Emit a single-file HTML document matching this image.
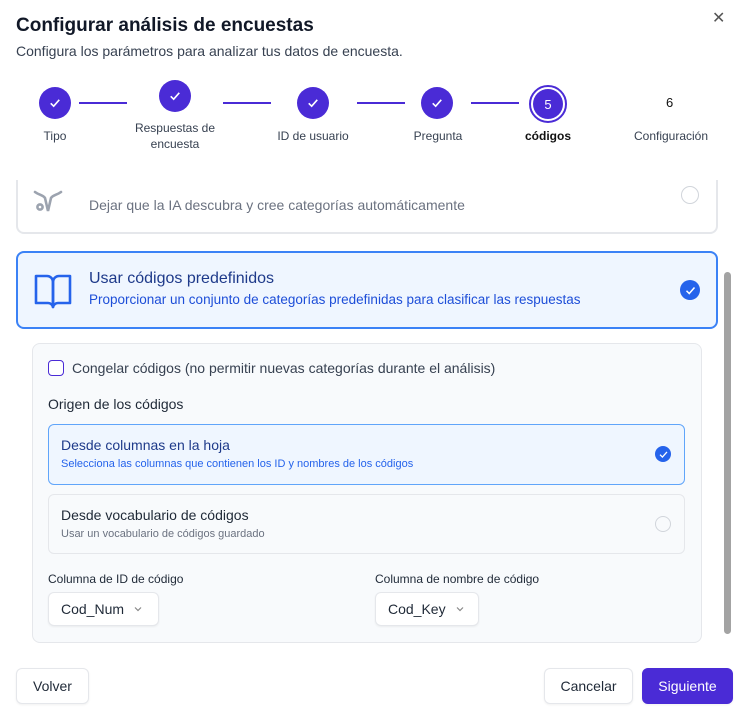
<!DOCTYPE html>
<html><head><meta charset="utf-8"><style>
*{box-sizing:border-box;margin:0;padding:0}
body{width:745px;height:716px;background:#fff;font-family:"Liberation Sans",sans-serif;color:#1f2937;position:relative;overflow:hidden}
.a{position:absolute}
.circ{position:absolute;width:32px;height:32px;border-radius:50%;background:#4a2bd6;color:#fff;display:flex;align-items:center;justify-content:center;font-size:13px}
.line{position:absolute;height:2px;background:#4a2bd6;top:102px}
.lbl{position:absolute;font-size:12px;color:#374151;text-align:center;transform:translateX(-50%);line-height:16px;white-space:nowrap}
.btn{position:absolute;border:1px solid #e5e7eb;border-radius:6px;background:#fff;font-size:14px;display:flex;align-items:center;justify-content:center;box-shadow:0 1px 2px rgba(0,0,0,.06)}
.chk{position:absolute;width:16px;height:16px;border-radius:50%;background:#2563eb;display:flex;align-items:center;justify-content:center}
</style></head><body>
<div class="a" style="left:16px;top:15px;font-size:19px;font-weight:700;color:#111827">Configurar análisis de encuestas</div>
<div class="a" style="left:16px;top:43px;font-size:14px;color:#374151">Configura los parámetros para analizar tus datos de encuesta.</div>
<div class="a" style="left:712px;top:8px;font-size:16px;color:#555">✕</div>

<svg width="0" height="0" style="position:absolute"><defs><symbol id="ck" viewBox="0 0 12 12"><path d="M2.8 6.2l2.2 2.2 4.2-4.8" fill="none" stroke="#fff" stroke-width="1.2"/></symbol></defs></svg>
<div class="circ" style="left:39px;top:87px"><svg width="16" height="16"><use href="#ck"/></svg></div>
<div class="circ" style="left:159px;top:80px"><svg width="16" height="16"><use href="#ck"/></svg></div>
<div class="circ" style="left:297px;top:87px"><svg width="16" height="16"><use href="#ck"/></svg></div>
<div class="circ" style="left:421px;top:87px"><svg width="16" height="16"><use href="#ck"/></svg></div>
<div class="circ" style="left:529px;top:85px;width:38px;height:38px;border:2px solid #4a2bd6;background:#fff"><div style="width:30px;height:30px;border-radius:50%;background:#4a2bd6;display:flex;align-items:center;justify-content:center">5</div></div>
<div class="a" style="left:666px;top:95px;font-size:13px;color:#111">6</div>
<div class="line" style="left:79px;width:48px"></div>
<div class="line" style="left:223px;width:48px"></div>
<div class="line" style="left:357px;width:48px"></div>
<div class="line" style="left:471px;width:48px"></div>
<div class="lbl" style="left:55px;top:128px">Tipo</div>
<div class="lbl" style="left:175px;top:120px">Respuestas de<br>encuesta</div>
<div class="lbl" style="left:313px;top:128px">ID de usuario</div>
<div class="lbl" style="left:438px;top:128px">Pregunta</div>
<div class="lbl" style="left:548px;top:128px;font-weight:600;color:#111">códigos</div>
<div class="lbl" style="left:671px;top:128px">Configuración</div>

<div class="a" style="left:16px;top:170px;width:702px;height:64px;border:2px solid #e5e7eb;border-top:none;border-radius:0 0 8px 8px;background:#fff"></div>
<div class="a" style="left:16px;top:160px;width:710px;height:20px;background:#fff"></div>
<svg class="a" style="left:33px;top:186px" width="38" height="30" viewBox="0 0 38 30" fill="none" stroke="#9ca3af" stroke-width="2.6" stroke-linecap="round"><circle cx="7" cy="21" r="2.6"/><path d="M2 6c4 3 8 3 10 6l3 13 3-13c2-3 6-3 10-6"/></svg>
<div class="a" style="left:89px;top:197px;font-size:14px;color:#6b7280">Dejar que la IA descubra y cree categorías automáticamente</div>
<div class="a" style="left:681px;top:186px;width:18px;height:18px;border:1.5px solid #d1d5db;border-radius:50%"></div>

<div class="a" style="left:16px;top:251px;width:702px;height:78px;border:2px solid #3b82f6;border-radius:8px;background:#eff6ff"></div>
<svg class="a" style="left:34px;top:273px" width="38" height="36" viewBox="0 0 38 36" fill="none" stroke="#2563eb" stroke-width="2.6" stroke-linejoin="round"><path d="M2 3h11a6 6 0 0 1 6 6v25a5 5 0 0 0-5-4H2z"/><path d="M36 3H25a6 6 0 0 0-6 6v25a5 5 0 0 1 5-4h12z"/></svg>
<div class="a" style="left:89px;top:270px;font-size:16px;color:#1e3a8a;font-weight:500">Usar códigos predefinidos</div>
<div class="a" style="left:89px;top:292px;font-size:13.5px;color:#1d4ed8">Proporcionar un conjunto de categorías predefinidas para clasificar las respuestas</div>
<div class="chk" style="left:680px;top:280px;width:20px;height:20px"><svg width="15" height="15"><use href="#ck"/></svg></div>

<div class="a" style="left:724px;top:272px;width:7px;height:362px;background:#a3a3a3;border-radius:4px"></div>

<div class="a" style="left:32px;top:343px;width:670px;height:300px;border:1px solid #e5e7eb;border-radius:8px;background:#f8fafc"></div>
<div class="a" style="left:48px;top:360px;width:16px;height:16px;border:1.5px solid #4a2bd6;border-radius:4px;background:#fff"></div>
<div class="a" style="left:72px;top:360px;font-size:14px;color:#374151">Congelar códigos (no permitir nuevas categorías durante el análisis)</div>
<div class="a" style="left:48px;top:396px;font-size:14px;color:#1f2937">Origen de los códigos</div>

<div class="a" style="left:48px;top:424px;width:637px;height:61px;border:1px solid #60a5fa;border-radius:6px;background:#eff6ff"></div>
<div class="a" style="left:61px;top:437px;font-size:14px;color:#1e3a8a">Desde columnas en la hoja</div>
<div class="a" style="left:61px;top:458px;font-size:11px;color:#2563eb">Selecciona las columnas que contienen los ID y nombres de los códigos</div>
<div class="chk" style="left:655px;top:446px"><svg width="13" height="13"><use href="#ck"/></svg></div>

<div class="a" style="left:48px;top:494px;width:637px;height:60px;border:1px solid #e5e7eb;border-radius:6px;background:#f8fafc"></div>
<div class="a" style="left:61px;top:507px;font-size:14px;color:#1f2937">Desde vocabulario de códigos</div>
<div class="a" style="left:61px;top:528px;font-size:11px;color:#6b7280">Usar un vocabulario de códigos guardado</div>
<div class="a" style="left:655px;top:516px;width:16px;height:16px;border:1.5px solid #d1d5db;border-radius:50%"></div>

<div class="a" style="left:48px;top:572px;font-size:12px;color:#1f2937">Columna de ID de código</div>
<div class="a" style="left:375px;top:572px;font-size:12px;color:#1f2937">Columna de nombre de código</div>
<div class="btn" style="left:48px;top:592px;width:111px;height:34px;justify-content:flex-start;padding-left:12px">Cod_Num<svg style="margin-left:9px" width="10" height="10" viewBox="0 0 10 10"><path d="M2 3.5l3 3 3-3" fill="none" stroke="#888" stroke-width="1.2"/></svg></div>
<div class="btn" style="left:375px;top:592px;width:104px;height:34px;justify-content:flex-start;padding-left:12px">Cod_Key<svg style="margin-left:9px" width="10" height="10" viewBox="0 0 10 10"><path d="M2 3.5l3 3 3-3" fill="none" stroke="#888" stroke-width="1.2"/></svg></div>

<div class="btn" style="left:16px;top:668px;width:73px;height:36px">Volver</div>
<div class="btn" style="left:544px;top:668px;width:89px;height:36px">Cancelar</div>
<div class="btn" style="left:642px;top:668px;width:91px;height:36px;background:#4a2bd6;color:#fff;border-color:#4a2bd6">Siguiente</div>
</body></html>
